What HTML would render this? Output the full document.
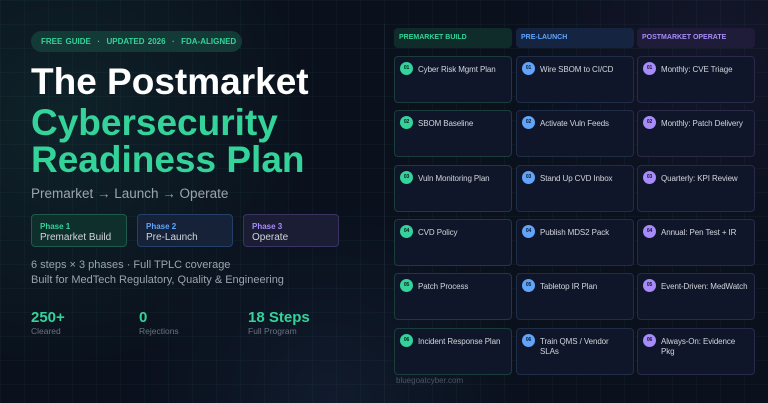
<!DOCTYPE html>
<html><head><meta charset="utf-8"><style>
*{margin:0;padding:0;box-sizing:border-box}
body{width:768px;height:403px;overflow:hidden;font-family:"Liberation Sans",sans-serif;background:#0a101c;position:relative;color:#e5e7eb}
.grid{position:absolute;inset:0;background-image:linear-gradient(rgba(60,120,110,.07) 1px,transparent 1px),linear-gradient(90deg,rgba(60,120,110,.07) 1px,transparent 1px);background-size:24px 24px}
.glow{position:absolute;inset:0;background:radial-gradient(circle at 60px 120px,rgba(30,90,80,.25),transparent 260px),radial-gradient(circle at 330px 400px,rgba(40,70,110,.2),transparent 200px),radial-gradient(circle at 720px 40px,rgba(90,60,140,.12),transparent 220px)}
.abs{position:absolute}
.pill{left:31px;top:31px;width:211px;height:21px;border-radius:11px;background:#133a36;color:#34d399;font-size:8px;font-weight:bold;line-height:21px;padding-left:10px;word-spacing:1px}
.t1{left:31px;top:62px;font-size:37px;font-weight:bold;color:#fff;line-height:40px}
.t2{left:31px;top:104px;font-size:37px;font-weight:bold;color:#34d399;line-height:37px}
.sub{left:31px;top:186px;font-size:13.5px;color:#9ca3af}
.ph{top:214px;width:96px;height:33px;border-radius:4px;padding:6px 8px;font-size:10px;line-height:11px}
.ph b{font-size:8px;display:block;margin-bottom:0}
.txt{left:31px;top:258px;font-size:11px;color:#9ca3af;line-height:14.5px}
.num{top:309px;font-size:15px;font-weight:bold;color:#34d399}
.lbl{top:326px;font-size:8.5px;color:#6b7280}
.div{left:384px;top:24px;width:1px;height:379px;background:#18232f}
.hd{top:28px;height:20px;width:118px;border-radius:4px;font-size:7px;font-weight:bold;line-height:20px;padding-left:5px}
.c{width:118px;height:47px;border-radius:4px;background:#10162a;font-size:8px;letter-spacing:-0.1px;color:#d1d5db;padding:8px 1px 0 23px;line-height:10px;white-space:nowrap}
.c i{position:absolute;left:5px;top:5px;width:13px;height:13px;border-radius:50%;font-style:normal;font-size:5px;color:#0f172a;line-height:12px;text-align:center;font-weight:bold}
.g{border:1px solid #1a3d3a}.g i{background:#34d399}
.bl{border:1px solid #1f2e48}.bl i{background:#60a5fa}
.p{border:1px solid #282a48}.p i{background:#a78bfa}
</style></head><body>
<div class="glow"></div><div class="grid"></div>
<div class="abs pill">FREE GUIDE &nbsp;·&nbsp; UPDATED 2026 &nbsp;·&nbsp; FDA-ALIGNED</div>
<div class="abs t1">The Postmarket</div>
<div class="abs t2">Cybersecurity<br>Readiness Plan</div>
<div class="abs sub">Premarket → Launch → Operate</div>
<div class="abs ph" style="left:31px;background:#0f2f2c;border:1px solid #1e5b4d"><b style="color:#34d399">Phase 1</b><span style="color:#d1d5db">Premarket Build</span></div>
<div class="abs ph" style="left:137px;background:#152238;border:1px solid #24406a"><b style="color:#60a5fa">Phase 2</b><span style="color:#d1d5db">Pre-Launch</span></div>
<div class="abs ph" style="left:243px;background:#1b1d34;border:1px solid #3a3362"><b style="color:#a78bfa">Phase 3</b><span style="color:#d1d5db">Operate</span></div>
<div class="abs txt">6 steps × 3 phases · Full TPLC coverage<br>Built for MedTech Regulatory, Quality &amp; Engineering</div>
<div class="abs num" style="left:31px">250+</div><div class="abs lbl" style="left:31px">Cleared</div>
<div class="abs num" style="left:139px">0</div><div class="abs lbl" style="left:139px">Rejections</div>
<div class="abs num" style="left:248px">18 Steps</div><div class="abs lbl" style="left:248px">Full Program</div>
<div class="abs div"></div>
<div class="abs hd" style="left:394px;background:#0f2b2a;color:#34d399">PREMARKET BUILD</div>
<div class="abs hd" style="left:516px;background:#152440;color:#60a5fa">PRE-LAUNCH</div>
<div class="abs hd" style="left:637px;background:#1e1c38;color:#a78bfa">POSTMARKET OPERATE</div>

<div class="abs c g" style="left:394px;top:56px"><i>01</i>Cyber Risk Mgmt Plan</div>
<div class="abs c g" style="left:394px;top:110px"><i>02</i>SBOM Baseline</div>
<div class="abs c g" style="left:394px;top:165px"><i>03</i>Vuln Monitoring Plan</div>
<div class="abs c g" style="left:394px;top:219px"><i>04</i>CVD Policy</div>
<div class="abs c g" style="left:394px;top:273px"><i>05</i>Patch Process</div>
<div class="abs c g" style="left:394px;top:328px"><i>06</i>Incident Response Plan</div>

<div class="abs c bl" style="left:516px;top:56px"><i>01</i>Wire SBOM to CI/CD</div>
<div class="abs c bl" style="left:516px;top:110px"><i>02</i>Activate Vuln Feeds</div>
<div class="abs c bl" style="left:516px;top:165px"><i>03</i>Stand Up CVD Inbox</div>
<div class="abs c bl" style="left:516px;top:219px"><i>04</i>Publish MDS2 Pack</div>
<div class="abs c bl" style="left:516px;top:273px"><i>05</i>Tabletop IR Plan</div>
<div class="abs c bl" style="left:516px;top:328px"><i>06</i>Train QMS / Vendor<br>SLAs</div>

<div class="abs c p" style="left:637px;top:56px"><i>01</i>Monthly: CVE Triage</div>
<div class="abs c p" style="left:637px;top:110px"><i>02</i>Monthly: Patch Delivery</div>
<div class="abs c p" style="left:637px;top:165px"><i>03</i>Quarterly: KPI Review</div>
<div class="abs c p" style="left:637px;top:219px"><i>04</i>Annual: Pen Test + IR</div>
<div class="abs c p" style="left:637px;top:273px"><i>05</i>Event-Driven: MedWatch</div>
<div class="abs c p" style="left:637px;top:328px"><i>06</i>Always-On: Evidence<br>Pkg</div>
<div class="abs" style="left:396px;top:376px;font-size:8px;color:#4b5563">bluegoatcyber.com</div>
</body></html>
